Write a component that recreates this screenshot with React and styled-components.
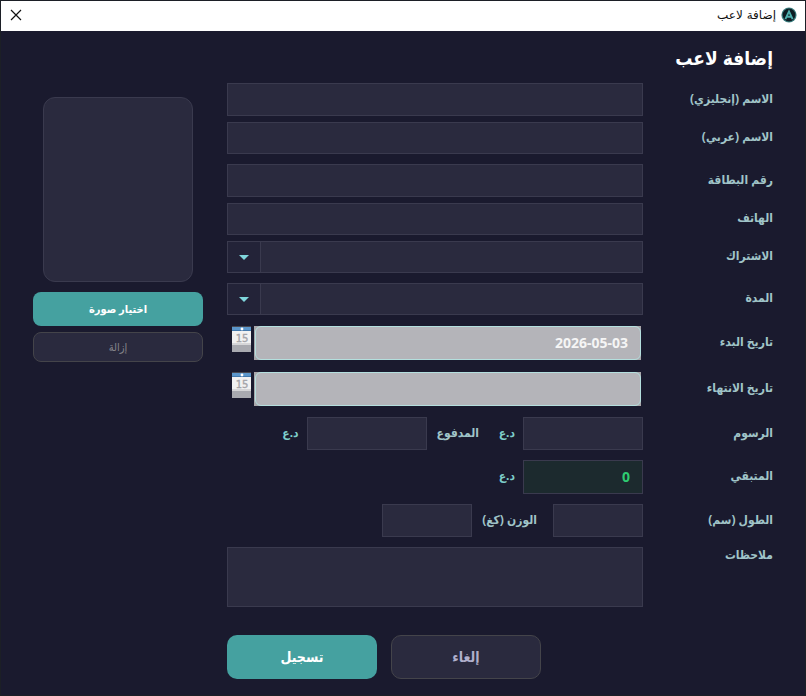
import styled, { createGlobalStyle, css } from "styled-components";

const App = () => {
  return (
    <>
      <GlobalStyle />
      <Window dir="rtl" lang="ar">
        <TitleBar>
          <Logo />
          <Caption>إضافة لاعب</Caption>
          <CloseButton type="button" aria-label="إغلاق">
            <svg width="12" height="12" viewBox="0 0 12 12" stroke="#111" strokeWidth="1.2">
              <path d="M1 1 L11 11 M11 1 L1 11" />
            </svg>
          </CloseButton>
        </TitleBar>
        <Content>
          <Form id="player" onSubmit={(e) => e.preventDefault()}>
            <Heading>إضافة لاعب</Heading>
            <Row $gap={6}>
              <Label htmlFor="nameEn">الاسم (إنجليزي)</Label>
              <Input id="nameEn" $height={33} />
            </Row>
            <Row>
              <Label htmlFor="nameAr">الاسم (عربي)</Label>
              <Input id="nameAr" />
            </Row>
            <Row $gap={6}>
              <Label htmlFor="card">رقم البطاقة</Label>
              <Input id="card" $height={33} />
            </Row>
            <Row $gap={6}>
              <Label htmlFor="phone">الهاتف</Label>
              <Input id="phone" />
            </Row>
            <Row>
              <Label htmlFor="plan">الاشتراك</Label>
              <Dropdown id="plan" />
            </Row>
            <Row>
              <Label htmlFor="duration">المدة</Label>
              <Dropdown id="duration" />
            </Row>
            <Row>
              <Label htmlFor="start">تاريخ البدء</Label>
              <DateField id="start" value="2026-05-03" />
            </Row>
            <Row>
              <Label htmlFor="end">تاريخ الانتهاء</Label>
              <DateField id="end" value="" />
            </Row>
            <Row>
              <Label htmlFor="fees">الرسوم</Label>
              <Input id="fees" $width={120} $height={33} />
              <Currency>د.ع</Currency>
              <InnerLabel htmlFor="paid">المدفوع</InnerLabel>
              <Input id="paid" $width={120} $height={33} />
              <Currency>د.ع</Currency>
            </Row>
            <Row>
              <Label htmlFor="remaining">المتبقي</Label>
              <TotalInput id="remaining" $width={120} $height={34} defaultValue="0" readOnly />
              <Currency>د.ع</Currency>
            </Row>
            <Row>
              <Label htmlFor="height">الطول (سم)</Label>
              <Input id="height" $width={90} $height={33} />
              <InnerLabel htmlFor="weight">الوزن (كغ)</InnerLabel>
              <Input id="weight" $width={90} $height={33} />
            </Row>
            <Row $gap={28} $top>
              <Label htmlFor="notes">ملاحظات</Label>
              <Notes id="notes" />
            </Row>
            <Actions>
              <CancelButton type="button">إلغاء</CancelButton>
              <SubmitButton type="submit">تسجيل</SubmitButton>
            </Actions>
          </Form>
          <PhotoPanel>
            <Photo />
            <ChooseButton type="button">اختيار صورة</ChooseButton>
            <RemoveButton type="button">إزالة</RemoveButton>
          </PhotoPanel>
        </Content>
      </Window>
    </>
  )
};

export default App;

const Logo = () => (
  <svg width="16" height="16" viewBox="0 0 16 16">
    <circle cx="8" cy="8" r="7.6" fill="#3c7f80" />
    <circle cx="8" cy="8" r="6.4" fill="#0d1c22" />
    <path d="M4.4 12.2 L8 4.4 L11.6 12.2 M5.6 9.8 H10.4" fill="none" stroke="#4fb0ae" strokeWidth="1.9" />
  </svg>
);

const Dropdown = ({ id }) => (
  <SelectBox>
    <Select id={id} defaultValue="">
      <option value=""></option>
    </Select>
    <Arrow>
      <svg width="10" height="5" viewBox="0 0 10 5">
        <path d="M0 0 H10 L5 5 Z" fill="#7fd6dc" />
      </svg>
    </Arrow>
  </SelectBox>
);

const DateField = ({ id, value }) => (
  <DateBox>
    <DateFrame>
      <DateInput id={id} defaultValue={value} />
    </DateFrame>
    <CalendarButton type="button" aria-label="التقويم">
      <svg width="19" height="26" viewBox="0 0 19 26">
        <rect y="1" width="19" height="25" fill="#a9aab0" />
        <rect y="5" width="19" height="13" fill="#f1f1f1" />
        <rect y="17" width="19" height="2" fill="#d6d6d8" />
        <rect width="19" height="1" fill="#47474f" />
        <rect y="1" width="19" height="4" fill="#5b96cb" />
        <rect y="4" width="19" height="1" fill="#4379ac" />
        <circle cx="10" cy="3" r="1.4" fill="#fff" />
        <text x="10" y="16" textAnchor="middle" fontFamily="DejaVu Sans" fontSize="10" stroke="#a8a8ac" strokeWidth="0.4" fill="#a4a4a8">15</text>
      </svg>
    </CalendarButton>
  </DateBox>
);

const GlobalStyle = createGlobalStyle`
  * {
    box-sizing: border-box;
  }
  body {
    margin: 0;
    background: #1a1b2e;
  }
  body, button, input, select, textarea {
    font-family: "Noto Sans", "DejaVu Sans Condensed", "DejaVu Sans", sans-serif;
  }
`;

const Window = styled.div`
  display: flex;
  flex-direction: column;
  min-height: 100vh;
  background: #1a1a2e;
  border: 1px solid #1c1f26;
`;

const TitleBar = styled.header`
  display: flex;
  align-items: center;
  gap: 5px;
  height: 30px;
  padding: 0 8px 2px;
  background: #fff;
`;

const Caption = styled.span`
  flex: 1;
  font-family: "DejaVu Sans", sans-serif;
  font-size: 12px;
  color: #111;
`;

const CloseButton = styled.button`
  display: flex;
  padding: 1px;
  border: 0;
  background: none;
`;

const Content = styled.main`
  display: flex;
  gap: 24px;
  padding: 12px 32px 16px;
`;

const Form = styled.form`
  flex: 1;
  min-width: 0;
`;

const Heading = styled.h1`
  margin: 0 0 10px;
  font-size: 19px;
  line-height: 30px;
  font-weight: bold;
  color: #fff;
`;

const Row = styled.div`
  display: flex;
  align-items: ${(p) => (p.$top ? "flex-start" : "center")};
  margin-bottom: ${(p) => p.$gap || 10}px;
`;

const Label = styled.label`
  flex: 0 0 130px;
  padding-bottom: 2px;
  font-size: 12px;
  line-height: 16px;
  font-weight: bold;
  color: #a0c4c8;
`;

const InnerLabel = styled(Label)`
  flex: none;
  padding-inline: 16px 10px;
`;

const Currency = styled.span`
  flex: 0 0 28px;
  padding-bottom: 2px;
  padding-inline-start: 8px;
  font-size: 12px;
  line-height: 16px;
  font-weight: bold;
  color: #7ececa;
`;

const box = css`
  border: 1px solid #3a3a4e;
  border-radius: 0;
  background: #2a2a3e;
  color: #fff;
  font-size: 14px;
  outline: 0;
`;

const Input = styled.input`
  ${box}
  flex: ${(p) => (p.$width ? `0 0 ${p.$width}px` : "1")};
  min-width: 0;
  height: ${(p) => p.$height || 32}px;
  padding: 0 12px 2px;
`;

const TotalInput = styled(Input)`
  background: #1c2a2e;
  color: #2ecc71;
  font-weight: bold;
`;

const SelectBox = styled.div`
  ${box}
  display: flex;
  flex: 1;
  height: 32px;
`;

const Select = styled.select`
  flex: 1;
  padding: 0 12px;
  border: 0;
  background: none;
  color: #fff;
  appearance: none;
  outline: 0;
`;

const Arrow = styled.span`
  display: flex;
  align-items: center;
  justify-content: center;
  width: 33px;
  border-right: 1px solid #3a3a4e;
  background: #232338;
  pointer-events: none;
`;

const DateBox = styled.div`
  display: flex;
  flex: 1;
  gap: 3px;
  padding: 1px 2px 1px 5px;
`;

const DateFrame = styled.div`
  flex: 1;
  height: 34px;
  padding-left: 1px;
  background: #a9a7ab;
`;

const DateInput = styled.input`
  width: 100%;
  height: 34px;
  padding: 0 12px 2px;
  border: 1px solid #b4dfde;
  border-radius: 6px;
  background: #b4b4b9;
  color: #f5f5f5;
  font-size: 14px;
  font-weight: bold;
  outline: 0;
`;

const CalendarButton = styled.button`
  display: flex;
  align-self: flex-start;
  padding: 0;
  border: 0;
  background: none;
`;

const Notes = styled.textarea`
  ${box}
  flex: 1;
  height: 60px;
  padding: 8px 12px;
  resize: none;
`;

const Actions = styled.div`
  display: flex;
  justify-content: flex-end;
  gap: 14px;
`;

const Button = styled.button`
  padding: 0 0 2px;
  border: 1px solid #44444a;
  border-radius: 10px;
  background: #2a2a3e;
  font-weight: bold;
`;

const CancelButton = styled(Button)`
  width: 150px;
  height: 44px;
  font-size: 14px;
  color: #b0b0cc;
`;

const SubmitButton = styled(CancelButton)`
  border: 0;
  background: #45a1a0;
  color: #fff;
`;

const PhotoPanel = styled.aside`
  display: flex;
  flex-direction: column;
  flex: 0 0 170px;
  padding-top: 54px;
`;

const Photo = styled.div`
  align-self: center;
  width: 150px;
  height: 185px;
  margin-bottom: 10px;
  border: 1px solid #3a3a4e;
  border-radius: 12px;
  background: #2a2a3e;
`;

const ChooseButton = styled(Button)`
  height: 34px;
  margin-bottom: 6px;
  border: 0;
  border-radius: 8px;
  background: #45a1a0;
  color: #fff;
  font-size: 11px;
`;

const RemoveButton = styled(Button)`
  height: 30px;
  border-radius: 8px;
  color: #85858c;
  font-size: 11px;
  font-weight: normal;
`;
